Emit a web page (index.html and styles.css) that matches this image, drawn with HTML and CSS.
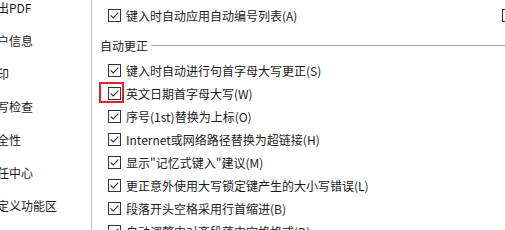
FILE: index.html
```html
<!DOCTYPE html>
<html lang="zh-CN">
<head>
    <meta charset="UTF-8">
    <meta name="viewport" content="width=device-width, initial-scale=1.0">
    <title>选项 - 编辑</title>
    <link rel="stylesheet" href="styles.css">
</head>
<body>
    <div class="dialog">
        <ul class="sidebar">
            <li>输出PDF</li>
            <li>用户信息</li>
            <li>打印</li>
            <li>拼写检查</li>
            <li>安全性</li>
            <li>信任中心</li>
            <li>自定义功能区</li>
        </ul>
        <div class="main">
            <div class="opt first">
                <span class="box checked"></span>
                <span>键入时自动应用自动编号列表(A)</span>
                <span class="box extra"></span>
            </div>

            <div class="group-title">自动更正</div>

            <div class="opt">
                <span class="box checked"></span>
                <span>键入时自动进行句首字母大写更正(S)</span>
            </div>
            <div class="opt">
                <span class="box checked marked"></span>
                <span>英文日期首字母大写(W)</span>
            </div>
            <div class="opt">
                <span class="box checked"></span>
                <span>序号(1st)替换为上标(O)</span>
            </div>
            <div class="opt">
                <span class="box checked"></span>
                <span>Internet或网络路径替换为超链接(H)</span>
            </div>
            <div class="opt">
                <span class="box checked"></span>
                <span>显示"记忆式键入"建议(M)</span>
            </div>
            <div class="opt">
                <span class="box checked"></span>
                <span>更正意外使用大写锁定键产生的大小写错误(L)</span>
            </div>
            <div class="opt">
                <span class="box checked"></span>
                <span>段落开头空格采用行首缩进(B)</span>
            </div>
            <div class="opt">
                <span class="box checked"></span>
                <span>自动调整中对齐段落中空格格式(D)</span>
            </div>
        </div>
    </div>
</body>
</html>
```

FILE: styles.css
```css
html, body {
    margin: 0;
    padding: 0;
    width: 505px;
    height: 230px;
    overflow: hidden;
    background: #ffffff;
}

body {
    font-family: "Noto Sans CJK SC", "Noto Sans", sans-serif;
    font-size: 12px;
    color: #1a1a1a;
}

.dialog {
    display: flex;
    height: 230px;
}

.sidebar {
    list-style: none;
    margin: 0;
    padding: 0;
    width: 91px;
    flex: none;
    border-right: 1px solid #c4c4c4;
    overflow: hidden;
}

.sidebar li {
    height: 33px;
    line-height: 33px;
    margin-left: -15px;
    white-space: nowrap;
}

.sidebar li:first-child {
    margin-top: -9px;
}

.main {
    flex: 1;
    padding-left: 8px;
    min-width: 0;
}

.opt {
    display: flex;
    align-items: center;
    gap: 5px;
    height: 23px;
    padding-left: 8px;
    white-space: nowrap;
}

.opt.first {
    margin-top: 4px;
}

.group-title {
    display: flex;
    align-items: center;
    height: 23px;
    margin-top: 7px;
    margin-bottom: 2px;
    color: #222;
    white-space: nowrap;
}

.group-title::after {
    content: "";
    flex: 1;
    height: 1px;
    margin-left: 3px;
    background: #a8a8a8;
}

.box {
    position: relative;
    flex: none;
    width: 13px;
    height: 13px;
    box-sizing: border-box;
    border: 1px solid #333333;
    background: #ffffff;
}

.box.checked {
    background-image: url("data:image/svg+xml;utf8,<svg xmlns='http://www.w3.org/2000/svg' width='11' height='11' viewBox='0 0 11 11'><polyline points='1.6,5.4 4.2,8 9.4,2.6' fill='none' stroke='%23333333' stroke-width='1.1'/></svg>");
    background-repeat: no-repeat;
    background-position: center;
}

.box.extra {
    margin-left: auto;
    margin-right: -10px;
    background-image: none;
}

/* highlight drawn over the screenshot */
.box.marked::before {
    content: "";
    position: absolute;
    left: -10px;
    top: -6px;
    width: 25px;
    height: 21px;
    box-sizing: border-box;
    border: 2px solid #e3222b;
}
```
